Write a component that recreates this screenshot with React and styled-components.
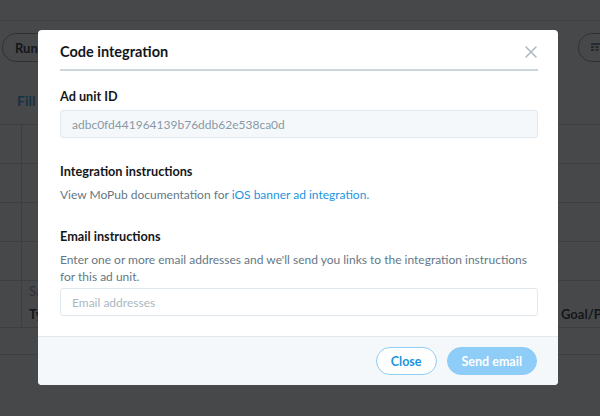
import styled, { createGlobalStyle } from "styled-components";

const GlobalStyle = createGlobalStyle`
  html, body {
    margin: 0;
    padding: 0;
    background: #ffffff;
  }
  body {
    font-family: "Lato", "Open Sans", sans-serif;
    color: #14171a;
  }
`;

const Page = styled.div`
  width: 600px;
  height: 416px;
  overflow: hidden;
  position: relative;
  background: #ffffff;
`;

const TopBar = styled.div`
  height: 20px;
  border-bottom: 1px solid #e1e8ed;
`;

const Toolbar = styled.div`
  display: flex;
  justify-content: space-between;
  align-items: center;
  padding: 12px 0 0 2px;
  margin-right: -88px;
`;

const Pill = styled.div`
  display: flex;
  align-items: center;
  height: 27px;
  padding: 0 12px;
  border: 1px solid #8899a6;
  border-radius: 14px;
  font-size: 13px;
  font-weight: 700;
  color: #14171a;
  gap: 8px;
`;

const SectionTitle = styled.div`
  padding: 30px 0 0 17px;
  height: 32px;
  font-size: 14px;
  font-weight: 700;
  color: #1b95e0;
`;

const Table = styled.div`
  border-top: 1px solid #c8d2d9;
`;

const Row = styled.div`
  display: grid;
  grid-template-columns: 22px 539px 1fr;
  height: ${(p) => p.$h}px;
  border-bottom: ${(p) => (p.$line ? "1px solid #c8d2d9" : "none")};
  align-items: center;
  font-size: 13px;
`;

const Cell = styled.div`
  height: 100%;
  display: flex;
  align-items: center;
  padding-left: ${(p) => (p.$flush ? 0 : 7)}px;
  border-right: ${(p) => (p.$divider ? "1px solid #c8d2d9" : "none")};
  font-weight: ${(p) => (p.$bold ? 700 : 400)};
  color: ${(p) => (p.$muted ? "#8899a6" : "#14171a")};
  white-space: nowrap;
  overflow: hidden;
`;

const Overlay = styled.div`
  position: absolute;
  inset: 0;
  background: rgba(20, 23, 26, 0.79);
  display: flex;
  justify-content: center;
  align-items: flex-start;
  padding: 30px 4px 0 0;
`;

const Modal = styled.div`
  width: 520px;
  background: #ffffff;
  border-radius: 4px;
  overflow: hidden;
  display: flex;
  flex-direction: column;
`;

const Header = styled.div`
  margin: 0 20px 0 22px;
  padding: 11px 0 7px;
  border-bottom: 2px solid #ccd6dd;
  display: flex;
  justify-content: space-between;
  align-items: center;
`;

const Title = styled.h2`
  margin: 0;
  font-size: 14.5px;
  line-height: 21px;
  font-weight: 700;
  color: #14171a;
`;

const CloseX = styled.button`
  border: none;
  background: none;
  padding: 0;
  margin-right: 1px;
  width: 12px;
  height: 12px;
  display: flex;
  color: #aab8c2;
  cursor: pointer;
`;

const Body = styled.div`
  padding: 16px 20px 20px 22px;
  display: flex;
  flex-direction: column;
`;

const Section = styled.div`
  display: flex;
  flex-direction: column;
  margin-top: ${(p) => p.$mt || 0}px;
`;

const Label = styled.div`
  font-size: 12.7px;
  line-height: 18px;
  font-weight: 700;
  color: #14171a;
  margin-bottom: ${(p) => p.$mb || 6}px;
`;

const Text = styled.p`
  margin: 0 0 ${(p) => p.$mb || 0}px;
  font-size: 12px;
  line-height: 17px;
  color: #657786;
`;

const Link = styled.a`
  color: #1b95e0;
  text-decoration: none;
`;

const Input = styled.input`
  box-sizing: border-box;
  width: 100%;
  height: 28px;
  padding: 0 11px;
  border: 1px solid #e1e8ed;
  border-radius: 3px;
  font-family: inherit;
  font-size: 12px;
  color: #8899a6;
  background: ${(p) => (p.readOnly ? "#f5f8fa" : "#ffffff")};
  outline: none;

  &::placeholder {
    color: #aab8c2;
  }
`;

const Footer = styled.div`
  border-top: 1px solid #e1e8ed;
  background: #f5f8fa;
  padding: 10px 21px 10px 22px;
  display: flex;
  justify-content: flex-end;
  gap: 10px;
`;

const Button = styled.button`
  box-sizing: border-box;
  height: 28px;
  padding: 0 14px;
  border-radius: 14px;
  font-family: inherit;
  font-size: 12.5px;
  font-weight: 700;
  border: 1px solid #8ecdf8;
  background: ${(p) => (p.$primary ? "#8ecdf8" : "#ffffff")};
  color: ${(p) => (p.$primary ? "#ffffff" : "#1b95e0")};
  cursor: pointer;
`;

const CalendarIcon = () => (
  <svg width="12" height="12" viewBox="0 0 12 12" fill="#657786">
    <rect x="0" y="1" width="12" height="2" />
    <rect x="0" y="4" width="3" height="2" />
    <rect x="4.5" y="4" width="3" height="2" />
    <rect x="9" y="4" width="3" height="2" />
    <rect x="0" y="7" width="3" height="2" />
    <rect x="4.5" y="7" width="3" height="2" />
    <rect x="9" y="7" width="3" height="2" />
  </svg>
);

const App = () => {
  return (
    <>
      <GlobalStyle />
      <Page>
        <TopBar />
        <Toolbar>
          <Pill>Run report</Pill>
          <Pill>
            <CalendarIcon />
            Last 7 days
          </Pill>
        </Toolbar>
        <SectionTitle>Fill rate</SectionTitle>
        <Table>
          <Row $h={38} $line>
            <Cell $divider />
            <Cell />
            <Cell />
          </Row>
          <Row $h={38} $line>
            <Cell $divider />
            <Cell />
            <Cell />
          </Row>
          <Row $h={38} $line>
            <Cell $divider />
            <Cell />
            <Cell />
          </Row>
          <Row $h={38} $line>
            <Cell $divider />
            <Cell />
            <Cell />
          </Row>
          <Row $h={20}>
            <Cell $divider />
            <Cell $muted>Saved segments</Cell>
            <Cell />
          </Row>
          <Row $h={26} $line>
            <Cell $divider />
            <Cell $bold>Type</Cell>
            <Cell $bold $flush>Goal/Priority</Cell>
          </Row>
          <Row $h={26} $line>
            <Cell />
            <Cell />
            <Cell />
          </Row>
        </Table>
        <Overlay>
          <Modal>
            <Header>
              <Title>Code integration</Title>
              <CloseX aria-label="Close">
                <svg width="12" height="12" viewBox="0 0 12 12">
                  <path
                    d="M1 1 L11 11 M11 1 L1 11"
                    stroke="currentColor"
                    strokeWidth="1.5"
                    strokeLinecap="round"
                  />
                </svg>
              </CloseX>
            </Header>
            <Body>
              <Section>
                <Label $mb={5}>Ad unit ID</Label>
                <Input readOnly value="adbc0fd441964139b76ddb62e538ca0d" />
              </Section>
              <Section $mt={24}>
                <Label>Integration instructions</Label>
                <Text>
                  View MoPub documentation for{" "}
                  <Link href="#">iOS banner ad integration</Link>.
                </Text>
              </Section>
              <Section $mt={24}>
                <Label>Email instructions</Label>
                <Text $mb={3}>
                  Enter one or more email addresses and we'll send you links to
                  the integration instructions for this ad unit.
                </Text>
                <Input placeholder="Email addresses" />
              </Section>
            </Body>
            <Footer>
              <Button>Close</Button>
              <Button $primary>Send email</Button>
            </Footer>
          </Modal>
        </Overlay>
      </Page>
    </>
  );
};

export default App;
